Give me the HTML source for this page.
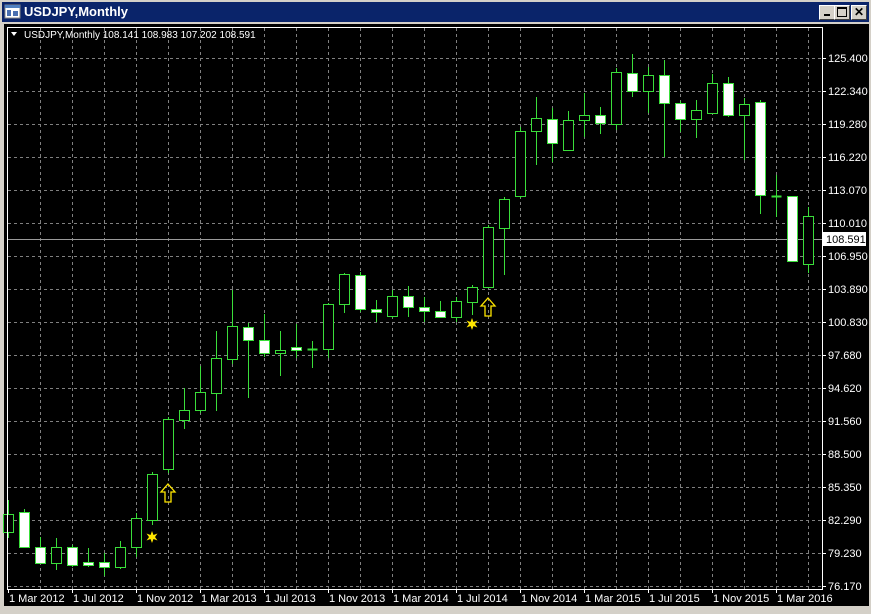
<!DOCTYPE html>
<html><head><meta charset="utf-8"><style>
html,body{margin:0;padding:0;background:#D4D0C8;}
body{width:871px;height:614px;position:relative;overflow:hidden;font-family:"Liberation Sans",sans-serif;}
#title{position:absolute;left:2px;top:2px;width:867px;height:20px;background:#0A246A;}
#title span{position:absolute;left:22px;top:2px;color:#fff;font-weight:bold;font-size:13px;}
.btn{position:absolute;top:3px;width:14px;height:13px;background:#D4D0C8;border:1px solid;border-color:#fff #404040 #404040 #fff;}
#chart{position:absolute;left:4px;top:24px;width:865px;height:582px;background:#000;}
svg{position:absolute;left:0;top:0;}
</style></head><body>
<div id="title">
<svg width="18" height="18" style="left:2px;top:1px"><rect x="1" y="2" width="15" height="13" fill="#fff" stroke="#888"/><rect x="1" y="2" width="15" height="3" fill="#5080c0"/><rect x="3" y="7" width="4" height="6" fill="#4a6fb0"/><rect x="9" y="8" width="5" height="5" fill="#4a6fb0"/></svg>
<span>USDJPY,Monthly</span>
<div class="btn" style="left:817px"><div style="position:absolute;left:4px;top:8px;width:6px;height:2px;background:#000"></div></div>
<div class="btn" style="left:832px"><div style="position:absolute;left:2px;top:1px;width:8px;height:7px;border:1px solid #000;border-top-width:2px"></div></div>
<div class="btn" style="left:849px;font-size:12px;font-weight:bold;text-align:center;line-height:13px">✕</div>
</div>
<div id="chart"></div>
<svg id="s" width="871" height="614" font-family="Liberation Sans, sans-serif" font-size="11">
<g id="grid" stroke="#808080" stroke-dasharray="3,3" stroke-width="1"></g>
<line x1="7" y1="239.5" x2="822" y2="239.5" stroke="#9a9a9a"/>
<g id="candles"></g>
<rect x="7.5" y="27.5" width="815" height="562" fill="none" stroke="#fff"/>
<g id="ticks" stroke="#fff"></g>
<g fill="#fff">
<text x="828" y="62">125.400</text><text x="828" y="95">122.340</text><text x="828" y="128">119.280</text><text x="828" y="161">116.220</text><text x="828" y="194">113.070</text><text x="828" y="227">110.010</text><text x="828" y="260">106.950</text><text x="828" y="293">103.890</text><text x="828" y="326">100.830</text><text x="828" y="359">97.680</text><text x="828" y="392">94.620</text><text x="828" y="425">91.560</text><text x="828" y="458">88.500</text><text x="828" y="491">85.350</text><text x="828" y="524">82.290</text><text x="828" y="557">79.230</text><text x="828" y="590">76.170</text>
</g>
<rect x="823" y="232" width="43" height="14" fill="#fff"/>
<text x="826" y="243" fill="#000">108.591</text>
<g fill="#fff">
<text x="9" y="602">1 Mar 2012</text><text x="73" y="602">1 Jul 2012</text><text x="137" y="602">1 Nov 2012</text><text x="201" y="602">1 Mar 2013</text><text x="265" y="602">1 Jul 2013</text><text x="329" y="602">1 Nov 2013</text><text x="393" y="602">1 Mar 2014</text><text x="457" y="602">1 Jul 2014</text><text x="521" y="602">1 Nov 2014</text><text x="585" y="602">1 Mar 2015</text><text x="649" y="602">1 Jul 2015</text><text x="713" y="602">1 Nov 2015</text><text x="777" y="602">1 Mar 2016</text>
</g>
<text x="24" y="38" fill="#fff" font-size="10">USDJPY,Monthly  108.141 108.983 107.202 108.591</text>
<path d="M11 32 L17 32 L14 36 Z" fill="#fff"/>
<g fill="#FFE600">
<path id="st1" d="M152 531 L153.5 535 L157.5 533.5 L155 537 L157.5 540.5 L153.5 539 L152 543 L150.5 539 L146.5 540.5 L149 537 L146.5 533.5 L150.5 535 Z"/>
<path d="M472 318 L473.5 322 L477.5 320.5 L475 324 L477.5 327.5 L473.5 326 L472 330 L470.5 326 L466.5 327.5 L469 324 L466.5 320.5 L470.5 322 Z"/>
</g>
<g fill="none" stroke="#FFE600" stroke-width="1.3">
<path d="M168 484 L175 492 L171 492 L171 502 L165 502 L165 492 L161 492 Z"/>
<path d="M488 298 L495 306 L491 306 L491 316 L485 316 L485 306 L481 306 Z"/>
</g>
</svg>
<script>
var ns="http://www.w3.org/2000/svg";
function el(p,t,a){var e=document.createElementNS(ns,t);for(var k in a)e.setAttribute(k,a[k]);p.appendChild(e);return e;}
var g=document.getElementById('grid');
for(var k=1;k<=25;k++){var x=8+32*k+0.5;el(g,'line',{x1:x,y1:28,x2:x,y2:589});}
for(var k=0;k<17;k++){var y=58+33*k+0.5;el(g,'line',{x1:8,y1:y,x2:822,y2:y});}
var t=document.getElementById('ticks');
for(var k=0;k<17;k++){var y=58+33*k+0.5;el(t,'line',{x1:823,y1:y,x2:826,y2:y});}
for(var k=0;k<13;k++){var x=8+64*k+0.5;el(t,'line',{x1:x,y1:589,x2:x,y2:593});}
var d=[[8,500,514,532,538,1],[24,509,512,547,547,0],[40,537,547,563,563,0],[56,538,547,563,570,1],[72,545,547,565,567,0],[88,548,562,565,567,0],[104,553,562,567,576,0],[120,541,547,567,569,1],[136,513,518,547,557,1],[152,472,474,520,525,1],[168,417,419,469,473,1],[184,388,410,420,429,1],[200,366,392,410,413,1],[216,331,358,393,411,1],[232,290,326,359,364,1],[248,323,327,340,398,0],[264,314,340,353,357,0],[280,331,350,353,376,1],[296,324,347,350,358,0],[312,341,349,349,368,2],[328,303,304,349,358,1],[344,273,274,304,313,1],[360,272,275,309,312,0],[376,300,309,312,322,0],[392,290,296,316,318,1],[408,286,296,307,317,0],[424,297,307,311,322,0],[440,301,311,317,318,0],[456,297,301,317,322,1],[472,285,287,302,315,1],[488,225,227,287,287,1],[504,197,199,228,275,1],[520,127,131,196,198,1],[536,97,118,131,165,1],[552,108,119,143,162,0],[568,111,120,150,151,1],[584,93,115,120,137,1],[600,107,115,123,134,0],[616,68,72,124,130,1],[632,54,73,91,97,0],[648,67,75,91,113,1],[664,60,75,103,157,0],[680,101,103,119,132,0],[696,100,110,119,138,1],[712,74,83,113,113,1],[728,77,83,115,117,0],[744,98,104,115,160,1],[760,100,102,195,214,0],[776,175,196,196,217,2],[792,196,196,261,262,0],[808,207,216,264,273,1]];
var c=document.getElementById('candles'),G='#3ade3a';
d.forEach(function(a){var x=a[0]+0.5;
el(c,'line',{x1:x,y1:a[1],x2:x,y2:a[4],stroke:G});
if(a[5]==2){el(c,'line',{x1:x-5,y1:a[2]+0.5,x2:x+5,y2:a[2]+0.5,stroke:G,'stroke-width':2});}
else{var h=Math.max(a[3]-a[2],3);el(c,'rect',{x:a[0]-4.5,y:a[2]+0.5,width:10,height:h,fill:a[5]?'#000':'#fff',stroke:G});}
});
</script>
</body></html>
